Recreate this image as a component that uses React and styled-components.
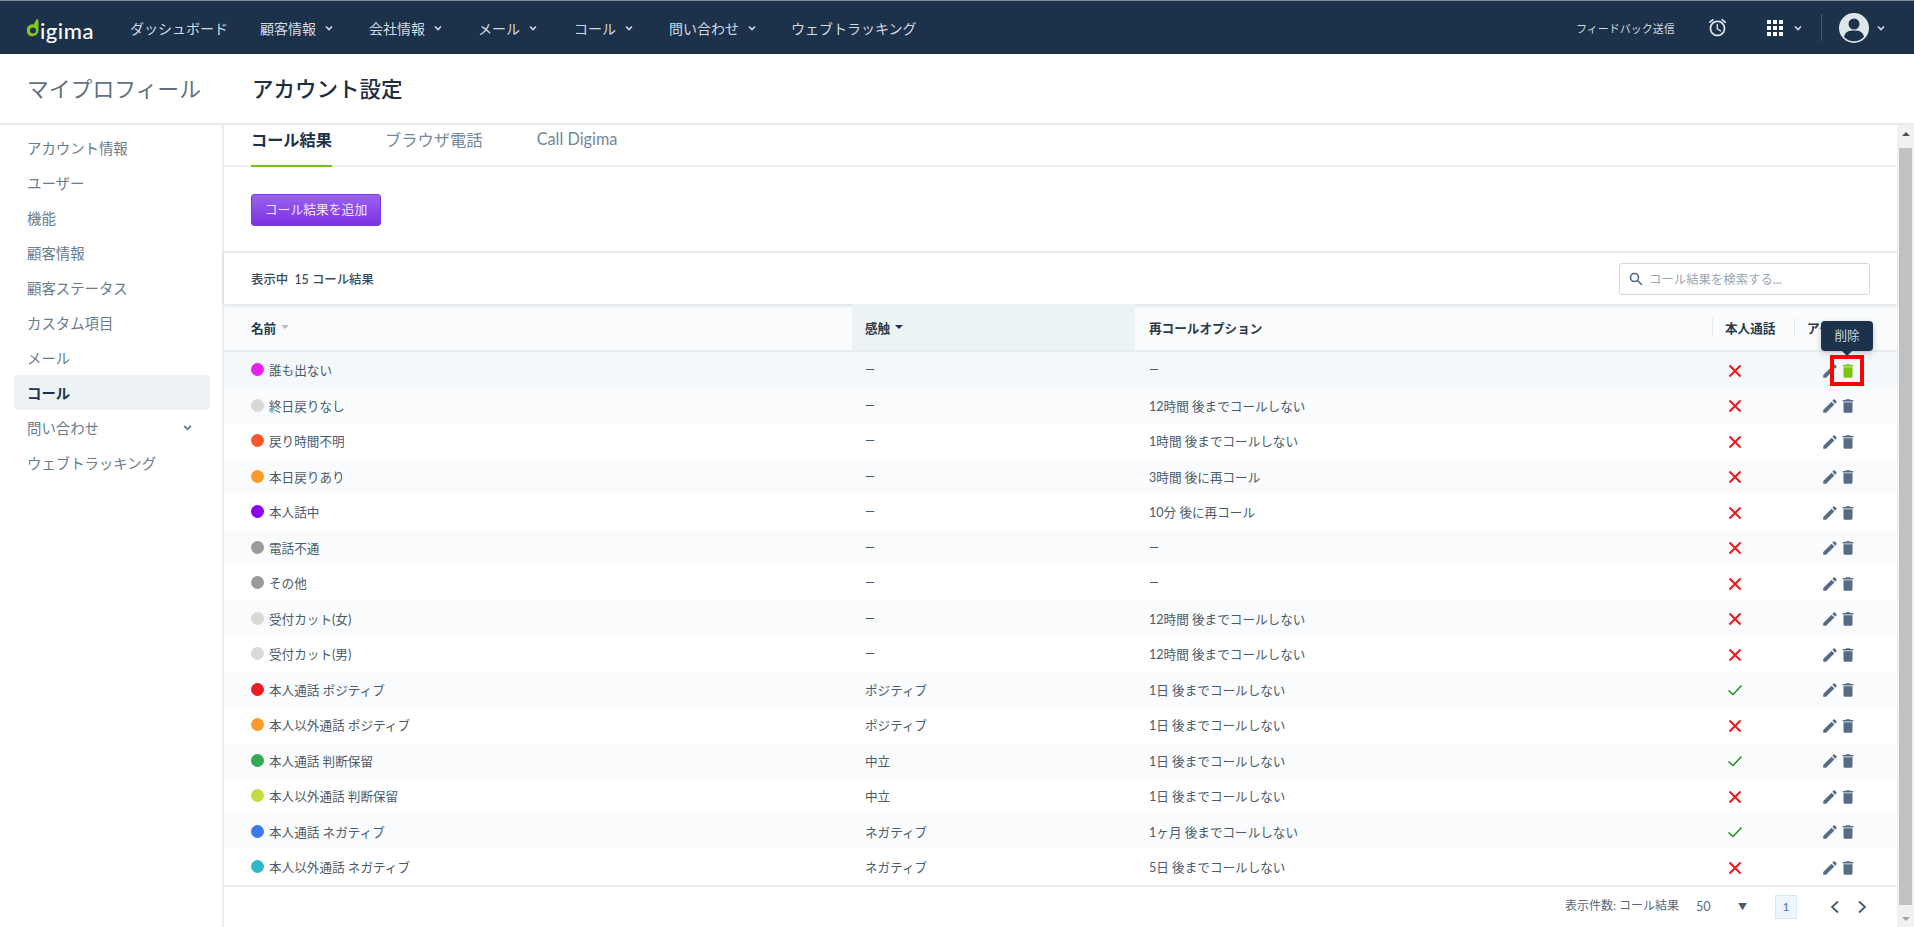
import React from 'react';
import styled, { createGlobalStyle } from 'styled-components';

const GlobalStyle = createGlobalStyle`
    html, body {
        margin: 0;
        padding: 0;
        background: #fff;
        font-family: "Lato", "Noto Sans CJK JP", sans-serif;
        overflow: hidden;
    }
    * {
        box-sizing: border-box;
    }
`;

const Page = styled.div`
    width: 1914px;
    height: 927px;
    display: flex;
    flex-direction: column;
    overflow: hidden;
`;

const TopBar = styled.header`
    height: 54px;
    flex: none;
    background: #1c324b;
    border-top: 1px solid #7f8b98;
    display: flex;
    align-items: center;
    color: #d3dbe2;
    font-size: 14px;
`;

const Logo = styled.div`
    width: 103px;
    margin-left: 27px;
    display: flex;
    align-items: center;
    color: #fff;
    font-size: 22px;
    font-weight: 500;
    letter-spacing: 0.5px;
    line-height: 1;
`;

const LogoWord = styled.span`
    margin-left: 1px;
    margin-top: 6px;
`;

const NavItem = styled.div`
    width: ${({ width }) => width}px;
    flex: none;
    display: flex;
    align-items: center;
    gap: 9px;
    white-space: nowrap;
`;

const TopRight = styled.div`
    margin-left: auto;
    display: flex;
    align-items: center;
`;

const Feedback = styled.span`
    font-size: 11px;
    width: 131px;
    white-space: nowrap;
`;

const AlarmIcon = styled.svg`
    width: 21px;
    height: 21px;
    fill: #dfe5ea;
    margin-right: 39px;
`;

const AppsIcon = styled.svg`
    width: 16px;
    height: 16px;
    fill: #fff;
    margin-right: 11px;
`;

const TopDivider = styled.div`
    width: 1px;
    height: 27px;
    background: #47596d;
    margin: 0 17px 0 19px;
`;

const Avatar = styled.svg`
    width: 30px;
    height: 30px;
    margin-right: 8px;
`;

const TopEndGap = styled.span`
    width: 29px;
`;

const Chevron = styled.svg`
    width: ${({ size }) => size || 8}px;
    height: ${({ size }) => size || 8}px;
    flex: none;
    fill: none;
    stroke: ${({ color }) => color || 'currentColor'};
    stroke-width: 1.6;
`;

const TitleBar = styled.div`
    height: 71px;
    flex: none;
    display: flex;
    align-items: center;
    border-bottom: 2px solid #e6ebef;
    padding: 0 0 2px 27px;
`;

const PageTitle = styled.div`
    width: 225px;
    font-size: 21.8px;
    color: #5f7183;
    white-space: nowrap;
`;

const SectionTitle = styled.h1`
    margin: 0;
    font-size: 21.5px;
    font-weight: 500;
    color: #1e2f42;
`;

const Body = styled.div`
    flex: 1;
    display: flex;
    min-height: 0;
`;

const Sidebar = styled.nav`
    width: 224px;
    flex: none;
    padding: 5px 12px 0 14px;
    border-right: 2px solid #e9edf1;
`;

const SideItem = styled.div`
    height: 35px;
    display: flex;
    align-items: center;
    justify-content: space-between;
    padding: 0 18px 0 13px;
    border-radius: 4px;
    font-size: 14.4px;
    white-space: nowrap;
    color: ${({ $active }) => ($active ? '#1c324b' : '#6a7b8c')};
    font-weight: ${({ $active }) => ($active ? 700 : 400)};
    background: ${({ $active }) => ($active ? '#edf3f5' : 'transparent')};
`;

const Main = styled.main`
    flex: 1;
    min-width: 0;
    display: flex;
    flex-direction: column;
`;

const Tabs = styled.div`
    height: 42px;
    flex: none;
    display: flex;
    padding-left: 27px;
    border-bottom: 2px solid #edf1f4;
`;

const Tab = styled.div`
    height: 42px;
    margin-right: ${({ gap }) => gap}px;
    padding-bottom: 13px;
    display: flex;
    align-items: center;
    white-space: nowrap;
    font-size: ${({ $active }) => ($active ? '16.2px' : '16.3px')};
    font-weight: ${({ $active }) => ($active ? 700 : 400)};
    color: ${({ $active }) => ($active ? '#1c324b' : '#75879a')};
    border-bottom: 2px solid ${({ $active }) => ($active ? '#76c40e' : 'transparent')};
`;

const ActionBar = styled.div`
    height: 86px;
    flex: none;
    padding: 27px 0 0 27px;
    border-bottom: 2px solid #e9edf1;
`;

const AddButton = styled.button`
    width: 130px;
    height: 32px;
    border: 1px solid #7d3ce0;
    border-radius: 3px;
    background: linear-gradient(#9a63f2, #7a30e0);
    color: #f1e9ff;
    font-family: inherit;
    font-size: 12.8px;
    padding: 0 0 3px;
    white-space: nowrap;
`;

const CountBar = styled.div`
    height: 51px;
    flex: none;
    display: flex;
    align-items: center;
    justify-content: space-between;
    padding: 0 27px;
    position: relative;
    box-shadow: 0 1px 4px rgba(40, 70, 100, 0.16);
    font-size: 12.4px;
    font-weight: 500;
    color: #3a4b5c;
`;

const SearchBox = styled.div`
    width: 251px;
    height: 32px;
    display: flex;
    align-items: center;
    gap: 6px;
    padding-left: 9px;
    border: 1px solid #ced8e0;
    border-radius: 3px;
    color: #98a6b4;
    font-size: 12.4px;
    font-weight: 400;
    white-space: nowrap;
`;

const TableRow = styled.div`
    display: grid;
    grid-template-columns: 628px 283px 577px 82px 103px;
    height: ${({ $header }) => ($header ? '48px' : '35.5px')};
    background: ${({ $header, $hover, $even }) =>
        $hover ? '#f4f8fb' : $header || $even ? '#f9fbfc' : '#fff'};
    border-bottom: ${({ $header }) => ($header ? '2px solid #e6ecf0' : 'none')};
`;

const Cell = styled.div`
    display: flex;
    align-items: center;
    padding-left: ${({ pad }) => (pad === undefined ? 13 : pad)}px;
    font-size: 12.6px;
    color: #4b5b6b;
    white-space: nowrap;
    position: relative;
    background: ${({ $sorted }) => ($sorted ? '#ecf3f5' : 'transparent')};
`;

const HeadLabel = styled.span`
    display: flex;
    align-items: center;
    gap: 5px;
    font-weight: 700;
    color: #2a3b4d;
    font-size: 12.6px;
`;

const HeadDivider = styled.span`
    width: 1px;
    height: 18px;
    background: #e1e7ec;
    margin-right: 12px;
`;

const SortMark = styled.span`
    width: 0;
    height: 0;
    border-left: 4px solid transparent;
    border-right: 4px solid transparent;
    border-top: 4px solid ${({ color }) => color};
`;

const Dot = styled.span`
    width: 13px;
    height: 13px;
    border-radius: 50%;
    margin-right: 5px;
    flex: none;
    background: ${({ color }) => color};
`;

const StatusIcon = styled.svg`
    width: 16px;
    height: 16px;
    margin: 2px 0 0 ${({ $offset }) => $offset}px;
    fill: none;
`;

const ActionIcon = styled.svg`
    width: 18px;
    height: 18px;
    flex: none;
    fill: ${({ color }) => color || '#566b84'};
`;

const ActionIcons = styled.div`
    display: flex;
    margin: 2px 0 0 27px;
`;

const Tooltip = styled.div`
    position: absolute;
    left: 27px;
    top: -31px;
    width: 52px;
    height: 30px;
    padding-bottom: 3px;
    border-radius: 4px;
    background: #1c324b;
    color: #ccd6df;
    font-size: 12.6px;
    display: flex;
    align-items: center;
    justify-content: center;
    box-shadow: 0 2px 6px rgba(30, 50, 75, 0.25);
    z-index: 2;

    &::after {
        content: '';
        position: absolute;
        left: 50%;
        bottom: -5px;
        margin-left: -5px;
        border-left: 5px solid transparent;
        border-right: 5px solid transparent;
        border-top: 5px solid #1c324b;
    }
`;

const Highlight = styled.div`
    position: absolute;
    left: 36px;
    top: 3px;
    width: 34px;
    height: 31px;
    border: 4px solid #f00;
    z-index: 1;
`;

const Footer = styled.div`
    flex: 1;
    display: flex;
    align-items: center;
    border-top: 2px solid #e6ecf0;
    font-size: 12px;
    color: #5a6a7a;
    padding-left: 1341px;
    white-space: nowrap;
`;

const PageSize = styled.span`
    width: 131px;
    margin-bottom: 4px;
`;

const PerPage = styled.span`
    width: 42px;
    font-size: 12.6px;
`;

const DropMark = styled.span`
    width: 37px;
    font-size: 9px;
    color: #47596d;
`;

const PageBox = styled.span`
    width: 22px;
    height: 24px;
    display: flex;
    align-items: center;
    justify-content: center;
    border: 1px solid #d6e6f6;
    background: #eef5fb;
    color: #3d70c2;
    margin-right: 32px;
`;

const Pager = styled.span`
    display: flex;
    gap: 15px;
`;

const ScrollTrack = styled.div`
    width: 17px;
    flex: none;
    background: #f1f1f1;
    display: flex;
    flex-direction: column;
    align-items: center;
    justify-content: space-between;
`;

const ScrollArrow = styled.span`
    height: 17px;
    flex: none;
    display: flex;
    align-items: center;
    justify-content: center;

    &::before {
        content: '';
        border-left: 4px solid transparent;
        border-right: 4px solid transparent;
        ${({ $up }) =>
            $up ? 'border-bottom: 4px solid #505050;' : 'border-top: 4px solid #a3a3a3;'}
    }
`;

const ScrollThumb = styled.span`
    width: 13px;
    flex: none;
    height: 757px;
    background: #c1c1c1;
`;

const ChevronDown = ({ size, color }) => (
    <Chevron size={size} color={color} viewBox="0 0 8 8">
        <path d="M1 2.5 L4 5.5 L7 2.5" />
    </Chevron>
);

const PencilIcon = () => (
    <ActionIcon viewBox="0 0 24 24">
        <path d="M3 17.25V21h3.75L17.81 9.94l-3.75-3.75L3 17.25zM20.71 7.04c.39-.39.39-1.02 0-1.41l-2.34-2.34c-.39-.39-1.02-.39-1.41 0l-1.83 1.83 3.75 3.75 1.83-1.83z" />
    </ActionIcon>
);

const TrashIcon = ({ color }) => (
    <ActionIcon color={color} viewBox="0 0 24 24">
        <path d="M6 19c0 1.1.9 2 2 2h8c1.1 0 2-.9 2-2V7H6v12zM19 4h-3.5l-1-1h-5l-1 1H5v2h14V4z" />
    </ActionIcon>
);

const StatusMark = ({ ok }) =>
    ok ? (
        <StatusIcon $offset={15} viewBox="0 0 16 16">
            <path d="M1.5 8.5 L6 12.5 L14.5 3.5" stroke="#1f8f1f" strokeWidth="1.5" />
        </StatusIcon>
    ) : (
        <StatusIcon $offset={15} viewBox="0 0 16 16">
            <path d="M2.5 2.5 L13.5 13.5 M13.5 2.5 L2.5 13.5" stroke="#f5141a" strokeWidth="2" />
        </StatusIcon>
    );

const navItems = [
    { label: 'ダッシュボード', width: 130 },
    { label: '顧客情報', width: 109, arrow: true },
    { label: '会社情報', width: 109, arrow: true },
    { label: 'メール', width: 96, arrow: true },
    { label: 'コール', width: 95, arrow: true },
    { label: '問い合わせ', width: 122, arrow: true },
    { label: 'ウェブトラッキング', width: 130 },
];

const sideItems = [
    'アカウント情報',
    'ユーザー',
    '機能',
    '顧客情報',
    '顧客ステータス',
    'カスタム項目',
    'メール',
    'コール',
    '問い合わせ',
    'ウェブトラッキング',
];

const rows = [
    { name: '誰も出ない', color: '#e620ef', emotion: '—', retry: '—' },
    { name: '終日戻りなし', color: '#d9d9d9', emotion: '—', retry: '12時間 後までコールしない' },
    { name: '戻り時間不明', color: '#f9582f', emotion: '—', retry: '1時間 後までコールしない' },
    { name: '本日戻りあり', color: '#fa9a2a', emotion: '—', retry: '3時間 後に再コール' },
    { name: '本人話中', color: '#9000f0', emotion: '—', retry: '10分 後に再コール' },
    { name: '電話不通', color: '#9b9b9b', emotion: '—', retry: '—' },
    { name: 'その他', color: '#9b9b9b', emotion: '—', retry: '—' },
    { name: '受付カット(女)', color: '#d9d9d9', emotion: '—', retry: '12時間 後までコールしない' },
    { name: '受付カット(男)', color: '#d9d9d9', emotion: '—', retry: '12時間 後までコールしない' },
    { name: '本人通話 ポジティブ', color: '#f01c25', emotion: 'ポジティブ', retry: '1日 後までコールしない', ok: true },
    { name: '本人以外通話 ポジティブ', color: '#fa9a2a', emotion: 'ポジティブ', retry: '1日 後までコールしない' },
    { name: '本人通話 判断保留', color: '#34a853', emotion: '中立', retry: '1日 後までコールしない', ok: true },
    { name: '本人以外通話 判断保留', color: '#c5dc40', emotion: '中立', retry: '1日 後までコールしない' },
    { name: '本人通話 ネガティブ', color: '#3f78ee', emotion: 'ネガティブ', retry: '1ヶ月 後までコールしない', ok: true },
    { name: '本人以外通話 ネガティブ', color: '#2fb8cc', emotion: 'ネガティブ', retry: '5日 後までコールしない' },
];

const App = () => {
    return (
        <Page>
            <GlobalStyle />
            <TopBar>
                <Logo>
                    <svg width="12" height="20" viewBox="0 0 12 20">
                        <path
                            d="M10.5 0.5 C8.5 3 7.5 4.5 7 6.5 A6 6 0 1 0 11.5 12.5 V4 C11.5 2.5 11 1.5 10.5 0.5 Z M6 9.5 A3 3 0 1 1 6 15.5 A3 3 0 1 1 6 9.5 Z"
                            fill="#84c71a"
                            fillRule="evenodd"
                        />
                    </svg>
                    <LogoWord>igima</LogoWord>
                </Logo>
                {navItems.map((item) => (
                    <NavItem key={item.label} width={item.width}>
                        {item.label}
                        {item.arrow && <ChevronDown />}
                    </NavItem>
                ))}
                <TopRight>
                    <Feedback>フィードバック送信</Feedback>
                    <AlarmIcon viewBox="0 0 24 24">
                        <path d="M22 5.72l-4.6-3.86-1.29 1.53 4.6 3.86L22 5.72zM7.88 3.39L6.6 1.86 2 5.71l1.29 1.53 4.59-3.85zM12.5 8H11v6l4.75 2.85.75-1.23-4-2.37V8zM12 4c-4.97 0-9 4.03-9 9s4.03 9 9 9 9-4.03 9-9-4.03-9-9-9zm0 16c-3.87 0-7-3.13-7-7s3.13-7 7-7 7 3.13 7 7-3.13 7-7 7z" />
                    </AlarmIcon>
                    <AppsIcon viewBox="0 0 16 16">
                        {[0, 6, 12].map((y) =>
                            [0, 6, 12].map((x) => <rect key={`${x}-${y}`} x={x} y={y} width="4" height="4" />)
                        )}
                    </AppsIcon>
                    <ChevronDown />
                    <TopDivider />
                    <Avatar viewBox="0 0 30 30">
                        <circle cx="15" cy="15" r="15" fill="#dfe6ea" />
                        <circle cx="15" cy="11" r="5.5" fill="#1c324b" />
                        <path d="M5 24 C6 18.5 10 17.5 15 17.5 C20 17.5 24 18.5 25 24 A14 14 0 0 1 5 24 Z" fill="#1c324b" />
                    </Avatar>
                    <ChevronDown />
                    <TopEndGap />
                </TopRight>
            </TopBar>
            <TitleBar>
                <PageTitle>マイプロフィール</PageTitle>
                <SectionTitle>アカウント設定</SectionTitle>
            </TitleBar>
            <Body>
                <Sidebar>
                    {sideItems.map((item) => (
                        <SideItem key={item} $active={item === 'コール'}>
                            {item}
                            {item === '問い合わせ' && <ChevronDown size={9} />}
                        </SideItem>
                    ))}
                </Sidebar>
                <Main>
                    <Tabs>
                        <Tab $active gap={53}>コール結果</Tab>
                        <Tab gap={54}>ブラウザ電話</Tab>
                        <Tab gap={0}>Call Digima</Tab>
                    </Tabs>
                    <ActionBar>
                        <AddButton>コール結果を追加</AddButton>
                    </ActionBar>
                    <CountBar>
                        <span>表示中&nbsp; 15 コール結果</span>
                        <SearchBox>
                            <svg width="14" height="14" viewBox="0 0 14 14" fill="none" stroke="#566b84" strokeWidth="1.6">
                                <circle cx="5.5" cy="5.5" r="4" />
                                <path d="M8.5 8.5 L13 13" />
                            </svg>
                            コール結果を検索する...
                        </SearchBox>
                    </CountBar>
                    <TableRow $header>
                        <Cell pad={27}>
                            <HeadLabel>名前 <SortMark color="#b7c0c9" /></HeadLabel>
                        </Cell>
                        <Cell $sorted>
                            <HeadLabel>感触 <SortMark color="#1c324b" /></HeadLabel>
                        </Cell>
                        <Cell pad={14}>
                            <HeadLabel>再コールオプション</HeadLabel>
                        </Cell>
                        <Cell pad={0}>
                            <HeadDivider />
                            <HeadLabel>本人通話</HeadLabel>
                        </Cell>
                        <Cell pad={0}>
                            <HeadDivider />
                            <HeadLabel>アクション</HeadLabel>
                        </Cell>
                    </TableRow>
                    {rows.map((row, index) => (
                        <TableRow key={row.name} $hover={index === 0} $even={index % 2 === 1}>
                            <Cell pad={27}>
                                <Dot color={row.color} />
                                {row.name}
                            </Cell>
                            <Cell>{row.emotion}</Cell>
                            <Cell pad={14}>{row.retry}</Cell>
                            <Cell pad={0}>
                                <StatusMark ok={row.ok} />
                            </Cell>
                            <Cell pad={0}>
                                <ActionIcons>
                                    <PencilIcon />
                                    <TrashIcon color={index === 0 ? '#79c60f' : undefined} />
                                </ActionIcons>
                                {index === 0 && (
                                    <>
                                        <Tooltip>削除</Tooltip>
                                        <Highlight />
                                    </>
                                )}
                            </Cell>
                        </TableRow>
                    ))}
                    <Footer>
                        <PageSize>表示件数: コール結果</PageSize>
                        <PerPage>50</PerPage>
                        <DropMark>▼</DropMark>
                        <PageBox>1</PageBox>
                        <Pager>
                            <svg width="12" height="14" viewBox="0 0 12 14" fill="none" stroke="#47596d" strokeWidth="1.8">
                                <path d="M9 1.5 L3 7 L9 12.5" />
                            </svg>
                            <svg width="12" height="14" viewBox="0 0 12 14" fill="none" stroke="#47596d" strokeWidth="1.8">
                                <path d="M3 1.5 L9 7 L3 12.5" />
                            </svg>
                        </Pager>
                    </Footer>
                </Main>
                <ScrollTrack>
                    <ScrollArrow $up />
                    <ScrollThumb />
                    <ScrollArrow />
                </ScrollTrack>
            </Body>
        </Page>
    );
};

export default App;
